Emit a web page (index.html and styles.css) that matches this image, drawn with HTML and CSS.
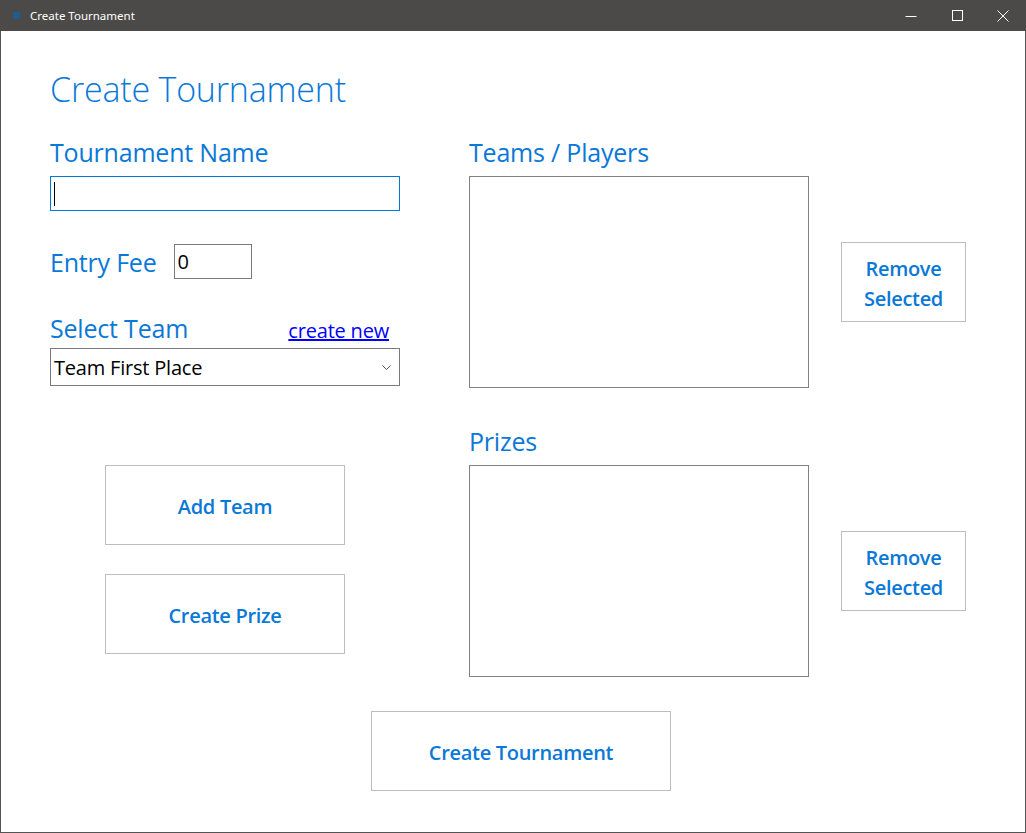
FILE: index.html
```html
<!DOCTYPE html>
<html>
<head>
<meta charset="utf-8">
<link rel="stylesheet" href="styles.css">
</head>
<body>
<div class="window">
  <div class="titlebar">
    <div class="app-icon"></div>
    <div class="title">Create Tournament</div>
    <div class="controls">
      <div class="ctl"><svg width="12" height="12" viewBox="0 0 12 12"><path d="M0.5 6.5H11.5" stroke="#fff" stroke-width="1"/></svg></div>
      <div class="ctl"><svg width="12" height="12" viewBox="0 0 12 12"><rect x="1.5" y="0.5" width="10" height="10" fill="none" stroke="#fff" stroke-width="1"/></svg></div>
      <div class="ctl"><svg width="12" height="12" viewBox="0 0 12 12"><path d="M0.5 0.5L11.5 11.5M11.5 0.5L0.5 11.5" stroke="#fff" stroke-width="1"/></svg></div>
    </div>
  </div>
  <div class="content">
    <h1 class="header">Create Tournament</h1>
    <div class="columns">
      <div class="left">
        <div class="label">Tournament Name</div>
        <div class="textbox focused"><span class="caret"></span></div>
        <div class="fee-row">
          <div class="label">Entry Fee</div>
          <div class="textbox small">0</div>
        </div>
        <div class="team-row">
          <div class="label">Select Team</div>
          <a class="link" href="#">create new</a>
        </div>
        <div class="dropdown">
          <span>Team First Place</span>
          <svg class="chev" width="9" height="6" viewBox="0 0 9 6"><path d="M0.5 0.5L4.5 4.5L8.5 0.5" fill="none" stroke="#555" stroke-width="1"/></svg>
        </div>
        <div class="btn wide first">Add Team</div>
        <div class="btn wide second">Create Prize</div>
      </div>
      <div class="right">
        <div class="label">Teams / Players</div>
        <div class="list-row">
          <div class="listbox"></div>
          <div class="btn side">Remove<br>Selected</div>
        </div>
        <div class="label prizes">Prizes</div>
        <div class="list-row">
          <div class="listbox"></div>
          <div class="btn side">Remove<br>Selected</div>
        </div>
      </div>
    </div>
    <div class="bottom">
      <div class="btn big">Create Tournament</div>
    </div>
  </div>
</div>
</body>
</html>
```
FILE: styles.css
```css
* { box-sizing: border-box; }
html, body { margin: 0; padding: 0; background: #fff; }
body { font-family: "Open Sans", "Noto Sans", sans-serif; }

.window {
  width: 1026px;
  height: 833px;
  border: 1px solid #545454;
  border-top: none;
  background: #fff;
  display: flex;
  flex-direction: column;
}

.titlebar {
  height: 31px;
  background: #4b4a48;
  display: flex;
  align-items: center;
  color: #fff;
  margin: 0 -1px;
}
.app-icon {
  width: 7px;
  height: 7px;
  background: #1f5b8c;
  margin-left: 13px;
  margin-right: 10px;
}
.title {
  font-family: "Noto Sans", sans-serif;
  font-size: 11.5px;
  flex: 1;
}
.controls { display: flex; height: 100%; }
.ctl {
  width: 46px;
  height: 100%;
  display: flex;
  align-items: center;
  justify-content: center;
}
.ctl svg { display: block; }

.content {
  flex: 1;
  padding-left: 49px;
}

.header {
  margin: 32px 0 0 0;
  font-weight: 300;
  font-size: 34px;
  line-height: 52px;
  color: #0a78d7;
  letter-spacing: -0.2px;
}

.label {
  color: #0a78d7;
  font-size: 25px;
  line-height: 32px;
  letter-spacing: -0.2px;
}

.columns {
  display: flex;
  margin-top: 21px;
}
.left { width: 350px; display: flex; flex-direction: column; }
.right { margin-left: 69px; display: flex; flex-direction: column; }

.textbox {
  height: 35px;
  border: 1px solid #7a7a7a;
  background: #fff;
  font-size: 20px;
  line-height: 33px;
  padding-left: 3px;
  color: #000;
}
.textbox.focused {
  margin-top: 8px;
  border-color: #0078d7;
  display: flex;
  align-items: center;
}
.caret {
  display: block;
  width: 1px;
  height: 24px;
  background: #000;
}
.fee-row {
  display: flex;
  align-items: center;
  margin-top: 33px;
}
.textbox.small { width: 78px; margin-left: 17px; }

.team-row {
  display: flex;
  justify-content: space-between;
  align-items: baseline;
  margin-top: 33px;
}
.link {
  color: #0000ff;
  font-size: 20px;
  text-decoration: underline;
  margin-right: 11px;
  letter-spacing: -0.2px;
}
.dropdown {
  margin-top: 4px;
  height: 38px;
  border: 1px solid #7a7a7a;
  display: flex;
  align-items: center;
  justify-content: space-between;
  padding: 0 8px 0 3px;
  font-size: 20px;
  color: #000;
  letter-spacing: -0.2px;
}
.chev { margin-top: 2px; }

.btn {
  border: 1px solid #bdbdbd;
  background: #fff;
  color: #0a78d7;
  font-weight: 600;
  font-size: 20px;
  display: flex;
  align-items: center;
  justify-content: center;
  text-align: center;
  line-height: 30px;
  letter-spacing: -0.3px;
  padding-top: 4px;
}
.btn.wide { width: 240px; height: 80px; margin-left: 55px; }
.btn.first { margin-top: 79px; }
.btn.second { margin-top: 29px; }

.list-row { display: flex; margin-top: 8px; }
.listbox {
  width: 340px;
  height: 212px;
  border: 1px solid #828282;
}
.btn.side {
  width: 125px;
  height: 80px;
  margin-left: 32px;
  margin-top: 66px;
}
.right .prizes { margin-top: 37px; }

.bottom {
  display: flex;
  padding-left: 321px;
  margin-top: 34px;
}
.btn.big { width: 300px; height: 80px; }
```
